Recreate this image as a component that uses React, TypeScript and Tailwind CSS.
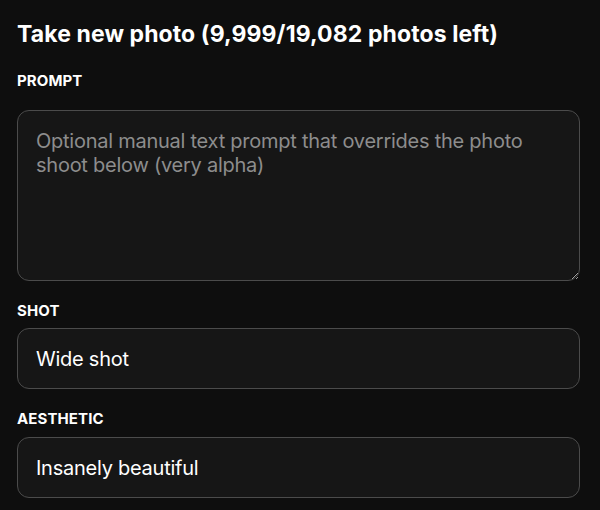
function Field({ label, children, first }: { label: string; children: React.ReactNode; first?: boolean }) {
  return (
    <div className={first ? 'mt-[22px]' : 'mt-[20px]'}>
      <label className="block text-[15px] font-bold leading-[20px] tracking-[0.1px]">{label}</label>
      {children}
    </div>
  );
}

export default function App() {
  return (
    <div className="min-h-screen w-full bg-[#0e0e0e] pl-[17px] pr-[20px] pt-[19px] font-['Inter','Noto_Sans',sans-serif] text-white">
      <h1 className="text-[23px] font-bold leading-[30px] tracking-[0.1px]">
        Take new photo (9,999/19,082 photos left)
      </h1>

      <Field label="PROMPT" first>
        <textarea
          className="mt-[19px] block h-[171px] w-full resize-y rounded-[12px] border border-[#4b4b4b] bg-[#161616] px-[18px] pt-[18px] text-[20px] leading-[24px] tracking-[-0.25px] text-white outline-none [color-scheme:dark] placeholder:text-[#8d8d8d]"
          placeholder="Optional manual text prompt that overrides the photo shoot below (very alpha)"
        />
      </Field>

      <Field label="SHOT">
        <div className="mt-[7px] flex h-[61px] w-full items-center rounded-[12px] border border-[#4b4b4b] bg-[#161616] px-[18px] text-[20px] leading-[24px] tracking-[-0.25px]">
          Wide shot
        </div>
      </Field>

      <Field label="AESTHETIC">
        <div className="mt-[8px] flex h-[61px] w-full items-center rounded-[12px] border border-[#4b4b4b] bg-[#161616] px-[18px] text-[20px] leading-[24px] tracking-[-0.25px]">
          Insanely beautiful
        </div>
      </Field>
    </div>
  );
}
